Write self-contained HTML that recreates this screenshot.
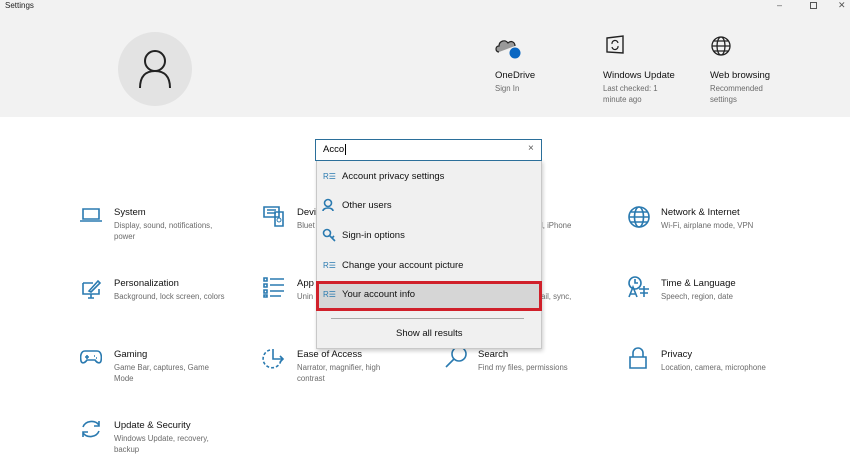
<!DOCTYPE html>
<html><head><meta charset="utf-8"><style>
*{margin:0;padding:0;box-sizing:border-box}
body{width:850px;height:448px;overflow:hidden;background:#fff;font-family:"Liberation Sans",sans-serif;position:relative;color:#000}
.a{position:absolute}
.hdr{left:0;top:0;width:850px;height:117px;background:#f2f2f2}
.t{font-size:9.5px;color:#111;white-space:nowrap}
.s{font-size:7.8px;color:#6b6b6b;line-height:11px}
.ic{stroke:#2a7ab0;fill:none;stroke-width:1.6}
.item{font-size:9.5px;color:#111;white-space:nowrap}
</style></head><body>
<div class="a hdr"></div>
<div class="a" style="left:5px;top:1px;font-size:8px;color:#222">Settings</div>
<div class="a" style="left:777px;top:0;font-size:9px;color:#555">–</div>
<div class="a" style="left:810px;top:2px;width:7px;height:7px;border:1px solid #555"></div>
<div class="a" style="left:838px;top:0;font-size:9px;color:#555">✕</div>
<div class="a" style="left:118px;top:32px;width:74px;height:74px;border-radius:50%;background:#e3e3e3"></div>
<svg class="a" style="left:138px;top:48px" width="34" height="42"><circle cx="17" cy="13" r="10" stroke="#222" stroke-width="2" fill="none"/><path d="M2 40 C2 28 8 23 17 23 C26 23 32 28 32 40" stroke="#222" stroke-width="2" fill="none"/></svg>

<svg class="a" style="left:495px;top:36px" width="28" height="24"><path d="M4 16 C0 16 0 10 4 10 C4 5 10 3 13 7 C16 4 20 6 20 10" stroke="#222" fill="#999" stroke-width="1.2"/><circle cx="20" cy="17" r="5.5" fill="#0a67c2"/></svg>
<div class="a t" style="left:495px;top:70px">OneDrive</div>
<div class="a s" style="left:495px;top:83px">Sign In</div>
<svg class="a" style="left:604px;top:35px" width="22" height="20"><path d="M3 3 L19 1 L19 18 L3 17 Z" stroke="#222" fill="none" stroke-width="1.4"/><path d="M8 9 A3 3 0 0 1 14 8 M14 11 A3 3 0 0 1 8 12" stroke="#222" fill="none" stroke-width="1.2"/></svg>
<div class="a t" style="left:603px;top:70px">Windows Update</div>
<div class="a s" style="left:603px;top:83px">Last checked: 1<br>minute ago</div>
<svg class="a" style="left:710px;top:35px" width="22" height="22"><g stroke="#222" fill="none" stroke-width="1.3"><circle cx="11" cy="11" r="9"/><ellipse cx="11" cy="11" rx="4" ry="9"/><path d="M2 11H20M4 6H18M4 16H18"/></g></svg>
<div class="a t" style="left:710px;top:70px">Web browsing</div>
<div class="a s" style="left:710px;top:83px">Recommended<br>settings</div>

<!-- grid -->
<svg class="a" style="left:80px;top:207px" width="22" height="16"><path class="ic" d="M3 2H19V12H3Z M0 14H22"/></svg>
<div class="a t" style="left:114px;top:207px">System</div>
<div class="a s" style="left:114px;top:220px">Display, sound, notifications,<br>power</div>
<svg class="a" style="left:80px;top:278px" width="22" height="22"><path class="ic" d="M3 5H13 M3 5V16H19V11 M8 20H14 M11 16V20 M9 13 L18 3 L20 5 L11 14 Z"/></svg>
<div class="a t" style="left:114px;top:278px">Personalization</div>
<div class="a s" style="left:114px;top:291px">Background, lock screen, colors</div>
<svg class="a" style="left:80px;top:349px" width="22" height="16"><path class="ic" d="M5 2H17C21 2 22 7 21 12C20 15 17 14 15 11H7C5 14 2 15 1 12C0 7 1 2 5 2Z M5 8H9M7 6V10M14 7H15M16 9H17"/></svg>
<div class="a t" style="left:114px;top:349px">Gaming</div>
<div class="a s" style="left:114px;top:362px">Game Bar, captures, Game<br>Mode</div>
<svg class="a" style="left:80px;top:418px" width="22" height="22"><path class="ic" d="M3 9A9 8 0 0 1 19 7 M19 3V8H14 M19 13A9 8 0 0 1 3 15 M3 19V14H8"/></svg>
<div class="a t" style="left:114px;top:420px">Update &amp; Security</div>
<div class="a s" style="left:114px;top:433px">Windows Update, recovery,<br>backup</div>

<svg class="a" style="left:263px;top:205px" width="22" height="22"><path class="ic" d="M1 2H16V12H1Z M4 5H13M4 8H13 M12 7H20V21H12Z" /><circle cx="16" cy="15" r="2" stroke="#2a7ab0" fill="none"/></svg>
<div class="a t" style="left:297px;top:207px">Devi</div>
<div class="a s" style="left:297px;top:220px">Bluet</div>
<svg class="a" style="left:263px;top:276px" width="22" height="22"><path class="ic" d="M1 2H4V5H1ZM1 8H4V11H1ZM1 14H4V17H1ZM1 19H4V21H1Z M7 3H21M7 9H21M7 15H21M7 20H18"/></svg>
<div class="a t" style="left:297px;top:278px">App</div>
<div class="a s" style="left:297px;top:291px">Unin</div>
<svg class="a" style="left:262px;top:346px" width="24" height="24"><path class="ic" d="M8 4A9 9 0 1 0 19 14" stroke-dasharray="3 2"/><path class="ic" d="M11 3V13H21 M18 10L21 13L18 16"/></svg>
<div class="a t" style="left:297px;top:349px">Ease of Access</div>
<div class="a s" style="left:297px;top:362px">Narrator, magnifier, high<br>contrast</div>
<div class="a s" style="left:541px;top:220px">l, iPhone</div>
<div class="a s" style="left:541px;top:291px">ail, sync,</div>

<svg class="a" style="left:444px;top:345px" width="24" height="24"><circle cx="15" cy="9" r="7" class="ic"/><path class="ic" d="M10 14L2 22"/></svg>
<div class="a t" style="left:478px;top:349px">Search</div>
<div class="a s" style="left:478px;top:362px">Find my files, permissions</div>

<svg class="a" style="left:627px;top:205px" width="24" height="24"><g class="ic"><circle cx="12" cy="12" r="10"/><ellipse cx="12" cy="12" rx="4.5" ry="10"/><path d="M2 12H22M4 7H20M4 17H20"/></g></svg>
<div class="a t" style="left:661px;top:207px">Network &amp; Internet</div>
<div class="a s" style="left:661px;top:220px">Wi-Fi, airplane mode, VPN</div>
<svg class="a" style="left:627px;top:275px" width="24" height="24"><g class="ic"><circle cx="8" cy="8" r="6"/><path d="M8 4V8H11 M2 22L6 12L10 22 M3.5 19H8.5 M12 14H22 M17 11V22 M13 18H21"/></g></svg>
<div class="a t" style="left:661px;top:278px">Time &amp; Language</div>
<div class="a s" style="left:661px;top:291px">Speech, region, date</div>
<svg class="a" style="left:628px;top:346px" width="20" height="24"><path class="ic" d="M2 11H18V22H2Z M5 11V7A5 5 0 0 1 15 7V11"/></svg>
<div class="a t" style="left:661px;top:349px">Privacy</div>
<div class="a s" style="left:661px;top:362px">Location, camera, microphone</div>

<!-- search dropdown -->
<div class="a" style="left:316px;top:160px;width:226px;height:189px;background:#f0f0f0;border:1px solid #c8c8c8;box-shadow:1px 2px 4px rgba(0,0,0,.2)"></div>
<div class="a" style="left:315px;top:139px;width:227px;height:22px;background:#fff;border:1.5px solid #2b6f9a"></div>
<div class="a" style="left:323px;top:144px;font-size:9.5px">Acco<span style="border-left:1px solid #000;margin-left:1px"></span></div>
<div class="a" style="left:528px;top:143px;font-size:10px;color:#555">×</div>

<div class="a" style="left:316px;top:281px;width:226px;height:30px;background:#d6d6d6;border:3px solid #d0202a"></div>
<div class="a" style="left:331px;top:318px;width:193px;height:1px;background:#aaa"></div>

<div class="a item" style="left:323px;top:172px;color:#2a7ab0;font-size:8px">R☰</div>
<div class="a item" style="left:342px;top:171px">Account privacy settings</div>
<svg class="a" style="left:322px;top:198px" width="14" height="14"><circle cx="6" cy="5" r="3.5" class="ic" stroke-width="1.2"/><path class="ic" stroke-width="1.2" d="M1 13C1 9 11 9 11 13"/></svg>
<div class="a item" style="left:342px;top:200px">Other users</div>
<svg class="a" style="left:322px;top:228px" width="14" height="14"><circle cx="5" cy="5" r="3.5" class="ic" stroke-width="1.2"/><path class="ic" stroke-width="1.2" d="M7 7L13 13M10 10L12 8"/></svg>
<div class="a item" style="left:342px;top:230px">Sign-in options</div>
<div class="a item" style="left:323px;top:261px;color:#2a7ab0;font-size:8px">R☰</div>
<div class="a item" style="left:342px;top:260px">Change your account picture</div>
<div class="a item" style="left:323px;top:290px;color:#2a7ab0;font-size:8px">R☰</div>
<div class="a item" style="left:342px;top:289px">Your account info</div>
<div class="a item" style="left:396px;top:328px">Show all results</div>
</body></html>
